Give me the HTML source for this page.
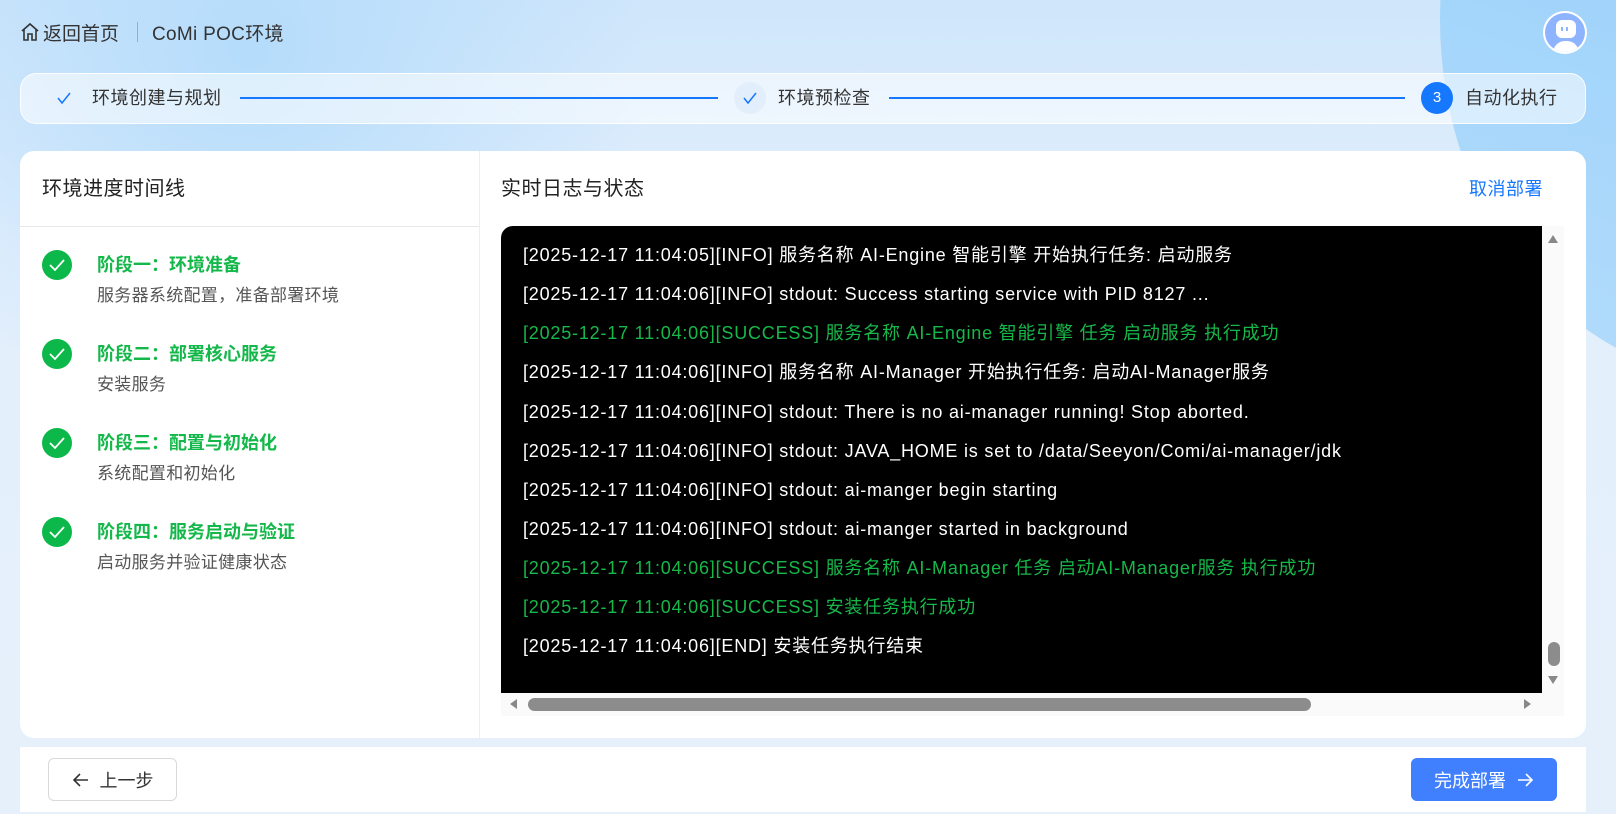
<!DOCTYPE html>
<html><head><meta charset="utf-8"><style>
*{margin:0;padding:0;box-sizing:border-box}
body{width:1616px;height:814px;overflow:hidden;font-family:"Liberation Sans","Noto Sans CJK SC",sans-serif;background:linear-gradient(180deg,#cfe6fb 0%,#e3effc 30%,#e6f0fb 100%);position:relative;color:#222}
.bg1{position:absolute;left:-200px;top:-300px;width:900px;height:700px;border-radius:50%;background:radial-gradient(circle,#b5dcfb 0%,rgba(200,228,252,0) 70%)}
.bg2{position:absolute;left:1440px;top:-340px;width:600px;height:720px;border-radius:50%;background:linear-gradient(200deg,#8ccbfb,#b4dcfb)}
.abs{position:absolute}
.hdr{left:20px;top:20px;font-size:19px;color:#333;display:flex;align-items:center;height:24px}
.steps{left:20px;top:73px;width:1566px;height:51px;border-radius:16px;background:rgba(255,255,255,.55);border:1px solid rgba(255,255,255,.9)}
.st{position:absolute;top:86px;font-size:18px;color:#333;line-height:24px;letter-spacing:.5px}
.line{position:absolute;top:97px;height:2px;background:#1677ff}
.card{left:20px;top:151px;width:1566px;height:587px;background:#fff;border-radius:14px}
.tl{position:absolute;left:58px;font-size:18px}
.ic{position:absolute;left:-16px;width:30px;height:30px;border-radius:50%;background:#0cb84a}
.t1{position:absolute;left:39px;width:300px;color:#14b84a;font-weight:bold;line-height:24px}
.t2{position:absolute;left:39px;width:300px;color:#555;font-size:17px;line-height:24px;letter-spacing:.3px}
.log{left:501px;top:226px;width:1041px;height:467px;background:#000;border-radius:12px 0 0 0;overflow:hidden}
.ln{position:absolute;left:22px;font-size:18px;color:#fff;white-space:nowrap;line-height:24px;letter-spacing:.8px}
.g{color:#17b84a}
.footer{left:20px;top:747px;width:1566px;height:65px;background:#fff}
</style></head><body>
<div class="bg1"></div><div class="bg2"></div>
<div class="abs hdr"><svg width="20" height="20" viewBox="0 0 20 20" fill="none" stroke="#333" stroke-width="1.6"><path d="M2 9 L10 2 L18 9 M4 7.5 V18 H8 V12 H12 V18 H16 V7.5"/></svg><span style="margin-left:3px">返回首页</span><span style="margin:0 14px 0 18px;width:1px;height:20px;background:#aaa;display:inline-block"></span><span style="letter-spacing:.3px">CoMi POC环境</span></div>
<div class="abs" style="left:1543px;top:11px;width:44px;height:43px;border-radius:50%;background:#8eb3ff;border:2px solid #fff;overflow:hidden"><div style="position:absolute;left:11px;top:7px;width:20px;height:18px;border-radius:6px;background:#fff"></div><div style="position:absolute;left:16px;top:14px;width:2px;height:4px;background:#8eb3ff"></div><div style="position:absolute;left:21px;top:14px;width:2px;height:4px;background:#8eb3ff"></div><div style="position:absolute;left:8px;top:28px;width:26px;height:20px;border-radius:12px 12px 0 0;background:#fff"></div></div>
<div class="abs steps"></div>
<svg class="abs" style="left:56px;top:90px" width="16" height="16" viewBox="0 0 16 16"><path d="M2 8 L6 13 L14 3" fill="none" stroke="#1677ff" stroke-width="1.5"/></svg>
<div class="st" style="left:92px">环境创建与规划</div>
<div class="line" style="left:240px;width:478px"></div>
<div class="abs" style="left:734px;top:82px;width:32px;height:32px;border-radius:50%;background:#e3eefc"></div>
<svg class="abs" style="left:742px;top:90px" width="16" height="16" viewBox="0 0 16 16"><path d="M2 8 L6 13 L14 3" fill="none" stroke="#1677ff" stroke-width="1.5"/></svg>
<div class="st" style="left:778px">环境预检查</div>
<div class="line" style="left:889px;width:516px"></div>
<div class="abs" style="left:1421px;top:82px;width:32px;height:32px;border-radius:50%;background:#1677ff;color:#fff;font-size:15px;text-align:center;line-height:32px">3</div>
<div class="st" style="left:1465px">自动化执行</div>
<div class="abs card">
<div style="position:absolute;left:459px;top:0;width:1px;height:587px;background:#eee"></div>
<div style="position:absolute;left:0;top:75px;width:459px;height:1px;background:#e8e8e8"></div>
<div style="position:absolute;left:22px;top:24px;font-size:20px;line-height:28px;letter-spacing:.5px">环境进度时间线</div>
<div style="position:absolute;left:481px;top:24px;font-size:20px;line-height:28px;letter-spacing:.5px">实时日志与状态</div>
<div style="position:absolute;left:1449px;top:26px;font-size:18px;line-height:24px;color:#1677ff;letter-spacing:.5px">取消部署</div>
</div>
<div class="tl" style="top:250px"><div class="ic"></div><svg class="abs" style="left:-10px;top:7px" width="18" height="16" viewBox="0 0 18 16"><path d="M2 8 L7 13 L16 3" fill="none" stroke="#fff" stroke-width="1.8"/></svg><div class="t1" style="top:3px">阶段一：环境准备</div><div class="t2" style="top:34px">服务器系统配置，准备部署环境</div></div>
<div class="tl" style="top:339px"><div class="ic"></div><svg class="abs" style="left:-10px;top:7px" width="18" height="16" viewBox="0 0 18 16"><path d="M2 8 L7 13 L16 3" fill="none" stroke="#fff" stroke-width="1.8"/></svg><div class="t1" style="top:3px">阶段二：部署核心服务</div><div class="t2" style="top:34px">安装服务</div></div>
<div class="tl" style="top:428px"><div class="ic"></div><svg class="abs" style="left:-10px;top:7px" width="18" height="16" viewBox="0 0 18 16"><path d="M2 8 L7 13 L16 3" fill="none" stroke="#fff" stroke-width="1.8"/></svg><div class="t1" style="top:3px">阶段三：配置与初始化</div><div class="t2" style="top:34px">系统配置和初始化</div></div>
<div class="tl" style="top:517px"><div class="ic"></div><svg class="abs" style="left:-10px;top:7px" width="18" height="16" viewBox="0 0 18 16"><path d="M2 8 L7 13 L16 3" fill="none" stroke="#fff" stroke-width="1.8"/></svg><div class="t1" style="top:3px">阶段四：服务启动与验证</div><div class="t2" style="top:34px">启动服务并验证健康状态</div></div>
<div class="abs log">
<div class="ln" style="top:17px">[2025-12-17 11:04:05][INFO] 服务名称 AI-Engine 智能引擎 开始执行任务: 启动服务</div>
<div class="ln" style="top:56px">[2025-12-17 11:04:06][INFO] stdout: Success starting service with PID 8127 ...</div>
<div class="ln g" style="top:95px">[2025-12-17 11:04:06][SUCCESS] 服务名称 AI-Engine 智能引擎 任务 启动服务 执行成功</div>
<div class="ln" style="top:134px">[2025-12-17 11:04:06][INFO] 服务名称 AI-Manager 开始执行任务: 启动AI-Manager服务</div>
<div class="ln" style="top:174px">[2025-12-17 11:04:06][INFO] stdout: There is no ai-manager running! Stop aborted.</div>
<div class="ln" style="top:213px">[2025-12-17 11:04:06][INFO] stdout: JAVA_HOME is set to /data/Seeyon/Comi/ai-manager/jdk</div>
<div class="ln" style="top:252px">[2025-12-17 11:04:06][INFO] stdout: ai-manger begin starting</div>
<div class="ln" style="top:291px">[2025-12-17 11:04:06][INFO] stdout: ai-manger started in background</div>
<div class="ln g" style="top:330px">[2025-12-17 11:04:06][SUCCESS] 服务名称 AI-Manager 任务 启动AI-Manager服务 执行成功</div>
<div class="ln g" style="top:369px">[2025-12-17 11:04:06][SUCCESS] 安装任务执行成功</div>
<div class="ln" style="top:408px">[2025-12-17 11:04:06][END] 安装任务执行结束</div>
</div>
<div class="abs" style="left:1542px;top:226px;width:22px;height:490px;background:#fafafa"></div>
<div class="abs" style="left:501px;top:693px;width:1041px;height:23px;background:#fafafa"></div>
<div class="abs" style="left:1548px;top:235px;width:0;height:0;border-left:5px solid transparent;border-right:5px solid transparent;border-bottom:8px solid #888"></div>
<div class="abs" style="left:1548px;top:676px;width:0;height:0;border-left:5px solid transparent;border-right:5px solid transparent;border-top:8px solid #888"></div>
<div class="abs" style="left:1548px;top:642px;width:12px;height:24px;border-radius:6px;background:#8c8c8c"></div>
<div class="abs" style="left:528px;top:698px;width:783px;height:13px;border-radius:7px;background:#8c8c8c"></div>
<div class="abs" style="left:510px;top:699px;width:0;height:0;border-top:5px solid transparent;border-bottom:5px solid transparent;border-right:7px solid #888"></div>
<div class="abs" style="left:1524px;top:699px;width:0;height:0;border-top:5px solid transparent;border-bottom:5px solid transparent;border-left:7px solid #888"></div>
<div class="abs footer"></div>
<div class="abs" style="left:48px;top:758px;width:129px;height:43px;border:1px solid #d9d9d9;border-radius:6px;background:#fff;font-size:18px;color:#333;display:flex;align-items:center;justify-content:center"><svg width="18" height="16" viewBox="0 0 18 16" style="margin-right:10px"><path d="M16 8 H2 M8 2 L2 8 L8 14" fill="none" stroke="#333" stroke-width="1.6"/></svg>上一步</div>
<div class="abs" style="left:1411px;top:758px;width:146px;height:43px;border-radius:6px;background:#4080ff;font-size:18px;color:#fff;display:flex;align-items:center;justify-content:center">完成部署<svg width="18" height="16" viewBox="0 0 18 16" style="margin-left:10px"><path d="M2 8 H16 M10 2 L16 8 L10 14" fill="none" stroke="#fff" stroke-width="1.6"/></svg></div>
</body></html>
